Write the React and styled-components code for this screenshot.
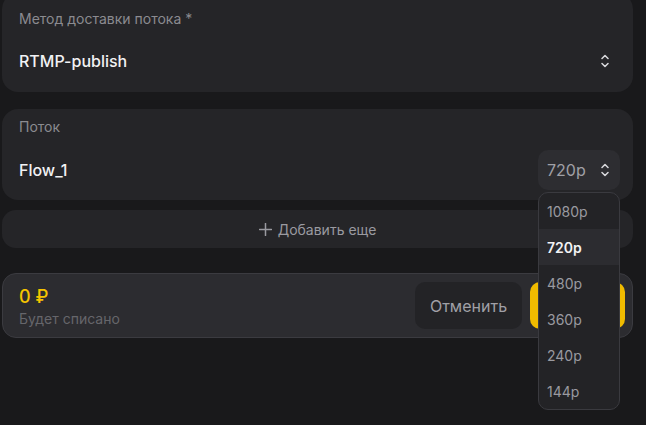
import React from 'react';
import styled, { createGlobalStyle } from 'styled-components';

const GlobalStyle = createGlobalStyle`
  html, body {
    margin: 0;
    padding: 0;
    min-height: 100vh;
    background: #19191b;
    font-family: Inter, 'Noto Sans', sans-serif;
  }
  #root {
    min-height: 100vh;
  }
`;

const Page = styled.div`
  width: 631px;
  min-height: 100vh;
  padding-left: 2px;
  display: flex;
  flex-direction: column;
`;

const Card = styled.div`
  position: relative;
  background: #252528;
  border-radius: 16px;
  display: flex;
  flex-direction: column;
  margin-top: ${(p) => p.$offset || 0}px;
  padding: ${(p) => p.$pad || '8px 13px 10px 17px'};
  gap: ${(p) => p.$gap || 13}px;
`;

const Label = styled.div`
  font-size: 14px;
  line-height: 20px;
  color: #8b8b90;
`;

const Row = styled.div`
  height: 40px;
  display: flex;
  align-items: center;
  justify-content: space-between;
`;

const Value = styled.div`
  font-size: 16px;
  font-weight: 500;
  color: #f2f2f4;
`;

const IconSlot = styled.div`
  width: 8px;
  height: 14px;
  margin-right: 11px;
  display: flex;
`;

const SelectWrap = styled.div`
  position: relative;
`;

const SelectButton = styled.div`
  width: 82px;
  height: 40px;
  box-sizing: border-box;
  padding: 0 11px 0 9px;
  background: #2d2d31;
  border-radius: 10px;
  display: flex;
  align-items: center;
  justify-content: space-between;
  font-size: 16px;
  color: #a0a0a6;
`;

const Menu = styled.div`
  position: absolute;
  top: 42px;
  left: 0;
  width: 82px;
  box-sizing: border-box;
  background: #232326;
  border: 1px solid #3a3a3f;
  border-radius: 10px;
  overflow: hidden;
  z-index: 10;
`;

const MenuItem = styled.div`
  height: 36px;
  display: flex;
  align-items: center;
  padding-left: 8px;
  font-size: 14px;
  font-weight: ${(p) => (p.$active ? 600 : 400)};
  color: ${(p) => (p.$active ? '#f2f2f4' : '#9a9aa0')};
  background: ${(p) => (p.$active ? '#2c2c30' : 'transparent')};
`;

const AddButton = styled.div`
  margin-top: 10px;
  height: 38px;
  border-radius: 14px;
  background: #252528;
  display: flex;
  align-items: center;
  justify-content: center;
  gap: 6px;
  font-size: 14px;
  color: #9a9aa0;
`;

const Footer = styled.div`
  margin-top: 25px;
  height: 65px;
  box-sizing: border-box;
  border: 1px solid #3b3b40;
  border-radius: 14px;
  background: #2c2c30;
  padding: 8px 7px 8px 16px;
  display: flex;
  align-items: center;
  justify-content: space-between;
`;

const Price = styled.div`
  display: flex;
  flex-direction: column;
  margin-top: 2px;
`;

const Amount = styled.div`
  font-size: 18px;
  font-weight: 500;
  line-height: 24px;
  color: #f5c400;
`;

const Hint = styled.div`
  font-size: 14px;
  line-height: 20px;
  color: #66666b;
`;

const Actions = styled.div`
  display: flex;
  gap: 8px;
`;

const Button = styled.button`
  height: 47px;
  border: none;
  border-radius: 10px;
  font-family: inherit;
  font-size: 16px;
  padding: 0;
  width: ${(p) => p.$w}px;
  background: ${(p) => (p.$primary ? '#f0bb00' : '#232326')};
  color: ${(p) => (p.$primary ? '#1a1a1a' : '#a0a0a6')};
`;

function UpDown() {
  return (
    <svg width="8" height="14" viewBox="0 0 8 14" fill="none">
      <path d="M1 4.5 L4 1.5 L7 4.5" stroke="#d8d8dc" strokeWidth="1.5" strokeLinecap="round" strokeLinejoin="round" />
      <path d="M1 9.5 L4 12.5 L7 9.5" stroke="#d8d8dc" strokeWidth="1.5" strokeLinecap="round" strokeLinejoin="round" />
    </svg>
  );
}

function Plus() {
  return (
    <svg width="13" height="13" viewBox="0 0 13 13" fill="none">
      <path d="M6.5 0.5 V12.5 M0.5 6.5 H12.5" stroke="#9a9aa0" strokeWidth="1.5" strokeLinecap="round" />
    </svg>
  );
}

const qualities = ['1080p', '720p', '480p', '360p', '240p', '144p'];

export default function App() {
  return (
    <>
      <GlobalStyle />
      <Page>
        <Card $offset={-7} $pad="16px 13px 11px 17px" $gap={12}>
          <Label>Метод доставки потока *</Label>
          <Row>
            <Value>RTMP-publish</Value>
            <IconSlot>
              <UpDown />
            </IconSlot>
          </Row>
        </Card>

        <Card $offset={17}>
          <Label>Поток</Label>
          <Row>
            <Value>Flow_1</Value>
            <SelectWrap>
              <SelectButton>
                <span>720p</span>
                <UpDown />
              </SelectButton>
              <Menu>
                {qualities.map((q) => (
                  <MenuItem key={q} $active={q === '720p'}>
                    {q}
                  </MenuItem>
                ))}
              </Menu>
            </SelectWrap>
          </Row>
        </Card>

        <AddButton>
          <Plus />
          Добавить еще
        </AddButton>

        <Footer>
          <Price>
            <Amount>0 ₽</Amount>
            <Hint>Будет списано</Hint>
          </Price>
          <Actions>
            <Button $w={107}>Отменить</Button>
            <Button $w={95} $primary>
              Создать
            </Button>
          </Actions>
        </Footer>
      </Page>
    </>
  );
}
